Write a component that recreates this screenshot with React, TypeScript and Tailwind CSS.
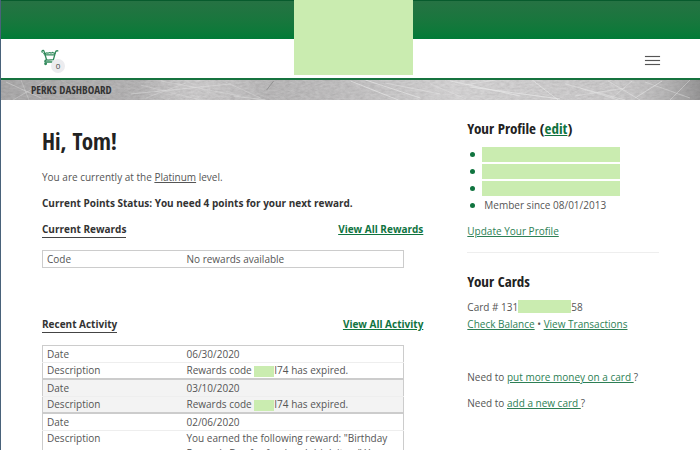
import type { ReactNode } from "react";

const activity = [
  { date: "06/30/2020", text: "Rewards code", tail: "I74 has expired." },
  { date: "03/10/2020", text: "Rewards code", tail: "I74 has expired." },
  { date: "02/06/2020", text: 'You earned the following reward: "Birthday Rewards Day for food and drink item" Your', tail: "" },
];

// [x1, y1, x2, y2, opacity]
const scratches = [
  [5, 2, 40, 18, 0.5], [12, 20, 45, 1, 0.4], [20, 0, 28, 20, 0.4], [60, 0, 95, 20, 0.2],
  [130, 14, 230, 4, 0.5], [140, 5, 200, 20, 0.4], [160, 1, 240, 16, 0.4], [145, 18, 185, 3, 0.4],
  [225, 2, 260, 18, 0.4], [233, 16, 265, 20, 0.6], [350, 1, 398, 20, 0.8], [365, 0, 420, 18, 0.8],
  [385, 3, 440, 14, 0.6], [430, 4, 466, 19, 0.5], [450, 1, 520, 16, 0.8], [470, 7, 560, 19, 0.9],
  [532, 0, 558, 20, 0.8], [565, 4, 625, 20, 0.6], [575, 16, 625, 8, 0.6], [580, 8, 618, 20, 0.6],
  [608, 1, 640, 20, 0.6], [612, 18, 632, 1, 0.5], [635, 18, 662, 1, 0.7], [645, 2, 690, 18, 0.5],
  [670, 20, 690, 0, 0.5], [465, 5, 495, 0, 0.6],
];

const Redacted = ({ className }: { className: string }) => (
  <span className={`bg-[#caecb0] ${className}`} />
);

const Heading = ({ children }: { children: ReactNode }) => (
  <h2 className="font-['Open_Sans_Condensed','Noto_Sans_Condensed','Liberation_Sans_Narrow',sans-serif] text-[15px] leading-[20px] font-bold text-[#222]">
    {children}
  </h2>
);

const TextLink = ({ children }: { children: ReactNode }) => (
  <a href="#" className="text-[#2d7f55] underline">
    {children}
  </a>
);

const SectionHeader = ({ title, link }: { title: string; link: string }) => (
  <div className="flex justify-between leading-[15px] font-bold">
    <h3 className="border-b border-[#444] text-[#333]">{title}</h3>
    <a href="#" className="text-[#10743f] underline">
      {link}
    </a>
  </div>
);

const ProfileItem = ({ children }: { children: ReactNode }) => (
  <li className="flex h-[17px] items-center">
    <span className="mr-[7px] ml-[3px] size-[5px] rounded-full bg-[#10743f]" />
    {children}
  </li>
);

const CartIcon = () => (
  <svg width="18" height="17" viewBox="0 0 18 17" fill="none" stroke="#2f895a" strokeWidth="1.3" strokeLinecap="round">
    <path d="M1.2 3.2C.2 1.6 2.4.6 3 2.2L5.4 10.2C5.6 11 6 11.2 7 11.1L12.4 10.6L14.4 3.4C14.7 2 15.4 1.6 16.8 1.8" />
    <path d="M2.8 4.6C4.5 5.2 5 3.2 6.4 4S8.4 2.8 9.4 3.8S11.4 2.6 12.2 3.8L14 4.4" />
    <path d="M4 5.8h9.4M5.4 11C3.6 11.4 3.2 13 5 13h6" />
    <circle cx="4.6" cy="14.8" r="0.8" />
  </svg>
);

const MetalTexture = () => (
  <svg className="absolute inset-0 h-full w-full" viewBox="0 0 700 20" preserveAspectRatio="none">
    <defs>
      <filter id="grain" x="0" y="0" width="100%" height="100%">
        <feTurbulence type="fractalNoise" baseFrequency="0.2 0.5" numOctaves="3" seed="4" />
        <feColorMatrix values="0.5 0 0 0 0.42  0.5 0 0 0 0.41  0.5 0 0 0 0.415  0 0 0 0 1" />
      </filter>
      <linearGradient id="shade">
        <stop offset="0" stopColor="#777" stopOpacity="0.35" />
        <stop offset="0.2" stopColor="#777" stopOpacity="0.2" />
        <stop offset="0.28" stopColor="#fff" stopOpacity="0.12" />
        <stop offset="0.38" stopColor="#777" stopOpacity="0.15" />
        <stop offset="0.65" stopColor="#fff" stopOpacity="0.25" />
        <stop offset="0.85" stopColor="#fff" stopOpacity="0.1" />
        <stop offset="1" stopColor="#666" stopOpacity="0.5" />
      </linearGradient>
    </defs>
    <rect width="700" height="20" filter="url(#grain)" opacity="0.5" />
    <rect width="700" height="20" fill="url(#shade)" />
    {scratches.map(([x1, y1, x2, y2, opacity], i) => (
      <line key={i} x1={x1} y1={y1} x2={x2} y2={y2} stroke="#e8e8e8" strokeWidth="0.8" opacity={opacity} />
    ))}
    <line x1="273" y1="1" x2="266" y2="10" stroke="#888" strokeWidth="0.8" />
  </svg>
);

export default function App() {
  return (
    <div className="h-screen overflow-hidden border-l border-[#49627a] bg-white font-['Open_Sans',sans-serif] text-[10px] leading-[17px] text-[#555]">
      <header className="relative">
        <div className="h-[39px] border-t border-[#075b2d] bg-linear-to-b from-[#257243] to-[#007b37]" />
        <div className="flex h-[41px] items-center justify-between border-b-2 border-[#16733f] pt-[3px] pr-[40px] pl-[40px]">
          <button aria-label="Cart, 0 items" className="relative pr-[6px] pb-[5px]">
            <CartIcon />
            <span className="absolute right-0 bottom-[-2px] size-[14px] rounded-full bg-[#ececef] text-center text-[8px] leading-[14px] text-[#444]">
              0
            </span>
          </button>
          <button aria-label="Menu" className="flex w-[15px] flex-col gap-[3px]">
            <span className="h-px w-full bg-[#555] shadow-[0_0_1px_#777]" />
            <span className="h-px w-full bg-[#555] shadow-[0_0_1px_#777]" />
            <span className="h-px w-full bg-[#555] shadow-[0_0_1px_#777]" />
          </button>
        </div>
        <Redacted className="absolute top-0 left-[41.9%] h-[75px] w-[119px]" />
      </header>

      <div className="relative h-[20px] bg-[#acaaab] pl-[30px]">
        <MetalTexture />
        <h2 className="relative font-['Open_Sans_Condensed','Noto_Sans_Condensed','Liberation_Sans_Narrow',sans-serif] text-[11px] leading-[20px] font-bold text-[#333]">
          PERKS DASHBOARD
        </h2>
      </div>

      <div className="flex gap-[44px] pr-[41px] pl-[41px]">
        <main className="min-w-0 flex-[382]">
          <h1 className="mt-[26px] font-['Open_Sans_Condensed','Noto_Sans_Condensed','Liberation_Sans_Narrow',sans-serif] text-[23px] leading-[30px] font-bold text-[#222]">
            Hi, Tom!
          </h1>
          <p className="mt-[13px]">
            You are currently at the{" "}
            <a href="#" className="underline">
              Platinum
            </a>{" "}
            level.
          </p>
          <p className="mt-[9px] mb-[10px] font-bold text-[#333]">
            Current Points Status: You need 4 points for your next reward.
          </p>

          <SectionHeader title="Current Rewards" link="View All Rewards" />
          <table className="mt-[12px] w-[95%] table-fixed border border-[#ccc]">
            <tbody>
              <tr className="leading-[16px]">
                <th className="w-[140px] pl-[4px] text-left font-normal">Code</th>
                <td className="pl-[4px]">No rewards available</td>
              </tr>
            </tbody>
          </table>

          <div className="mt-[49px]">
            <SectionHeader title="Recent Activity" link="View All Activity" />
          </div>
          <table className="mt-[12px] w-[95%] table-fixed border border-[#ccc]">
            {activity.map(({ date, text, tail }) => (
              <tbody key={date} className="border-b-2 border-[#ccc] even:bg-[#f3f3f3]">
                <tr className="border-b border-[#eee] leading-[16px]">
                  <th className="w-[140px] pl-[4px] text-left font-normal">Date</th>
                  <td className="pl-[4px]">{date}</td>
                </tr>
                <tr className="align-top leading-[15px]">
                  <th className="pl-[4px] text-left font-normal">Description</th>
                  <td className="pl-[4px]">
                    {text}
                    {tail && (
                      <>
                        {" "}
                        <Redacted className="inline-block h-[11px] w-[20px] align-middle" />
                        {tail}
                      </>
                    )}
                  </td>
                </tr>
              </tbody>
            ))}
          </table>
        </main>

        <aside className="min-w-0 flex-[192] pt-[18px]">
          <Heading>
            Your Profile (
            <a href="#" className="text-[#10743f] underline">
              edit
            </a>
            )
          </Heading>
          <ul className="mt-[8px]">
            <ProfileItem>
              <Redacted className="h-[15px] w-[138px]" />
            </ProfileItem>
            <ProfileItem>
              <Redacted className="h-[15px] w-[138px]" />
            </ProfileItem>
            <ProfileItem>
              <Redacted className="h-[15px] w-[138px]" />
            </ProfileItem>
            <ProfileItem>
              <span className="pl-[2px]">Member since 08/01/2013</span>
            </ProfileItem>
          </ul>
          <p className="mt-[9px]">
            <TextLink>Update Your Profile</TextLink>
          </p>
          <hr className="mt-[12px] mb-[18px] border-[#eee]" />

          <Heading>Your Cards</Heading>
          <p className="mt-[8px]">
            Card # 131
            <Redacted className="mt-px inline-block h-[13px] w-[53px] align-top" />
            58
          </p>
          <p>
            <TextLink>Check Balance</TextLink> • <TextLink>View Transactions</TextLink>
          </p>
          <p className="mt-[36px]">
            Need to <TextLink>put more money on a card </TextLink>?
          </p>
          <p className="mt-[9px]">
            Need to <TextLink>add a new card </TextLink>?
          </p>
        </aside>
      </div>
    </div>
  );
}
